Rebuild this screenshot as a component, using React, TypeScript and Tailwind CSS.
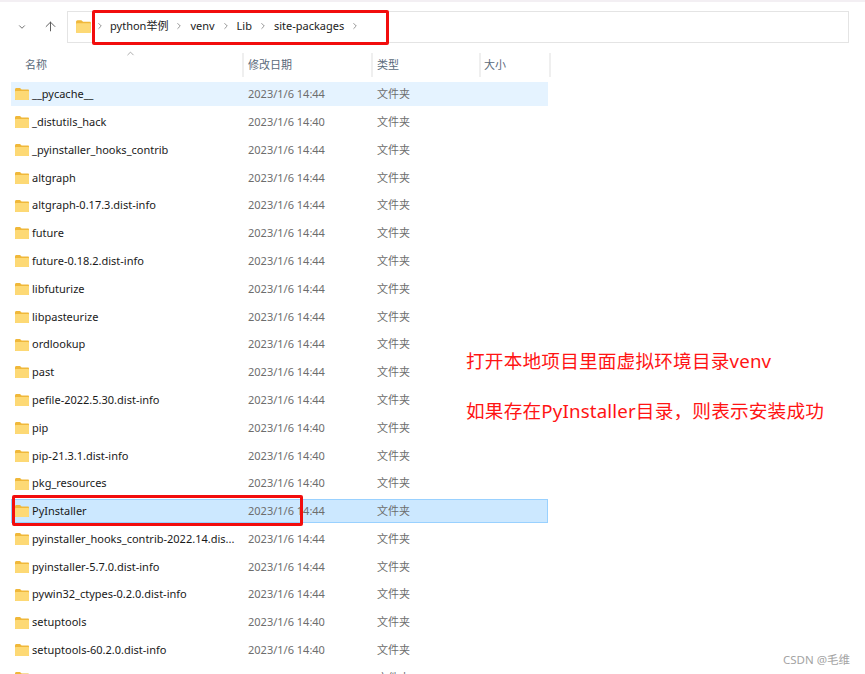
import { ChevronDown, ArrowUp, ChevronRight, ChevronUp } from 'lucide-react'

const rows = [
  ['__pycache__', '2023/1/6 14:44'],
  ['_distutils_hack', '2023/1/6 14:40'],
  ['_pyinstaller_hooks_contrib', '2023/1/6 14:44'],
  ['altgraph', '2023/1/6 14:44'],
  ['altgraph-0.17.3.dist-info', '2023/1/6 14:44'],
  ['future', '2023/1/6 14:44'],
  ['future-0.18.2.dist-info', '2023/1/6 14:44'],
  ['libfuturize', '2023/1/6 14:44'],
  ['libpasteurize', '2023/1/6 14:44'],
  ['ordlookup', '2023/1/6 14:44'],
  ['past', '2023/1/6 14:44'],
  ['pefile-2022.5.30.dist-info', '2023/1/6 14:44'],
  ['pip', '2023/1/6 14:40'],
  ['pip-21.3.1.dist-info', '2023/1/6 14:40'],
  ['pkg_resources', '2023/1/6 14:40'],
  ['PyInstaller', '2023/1/6 14:44'],
  ['pyinstaller_hooks_contrib-2022.14.dis...', '2023/1/6 14:44'],
  ['pyinstaller-5.7.0.dist-info', '2023/1/6 14:44'],
  ['pywin32_ctypes-0.2.0.dist-info', '2023/1/6 14:44'],
  ['setuptools', '2023/1/6 14:40'],
  ['setuptools-60.2.0.dist-info', '2023/1/6 14:40'],
  ['wheel', '2023/1/6 14:40'],
]

const Folder = ({ size = 16 }: { size?: number }) => (
  <svg width={size} height={size} viewBox="0 0 16 16" className="shrink-0">
    <path d="M1 3.5C1 2.7 1.6 2 2.4 2H6l1.6 1.6H14c.6 0 1 .5 1 1V13c0 .6-.5 1-1 1H2c-.6 0-1-.4-1-1z" fill="#f0b83a" />
    <path d="M1 6c0-.6.5-1 1-1h12c.6 0 1 .4 1 1v7c0 .6-.5 1-1 1H2c-.6 0-1-.4-1-1z" fill="#fdd975" />
  </svg>
)

const Crumb = ({ label }: { label: string }) => (
  <div className="flex items-center gap-[6px]">
    <span>{label}</span>
    <ChevronRight size={10} strokeWidth={1.5} className="text-[#555]" />
  </div>
)

const Row = ({ name, date, index }: { name: string; date: string; index: number }) => {
  const selected = name === 'PyInstaller'
  const hovered = index === 0
  return (
    <div className="relative flex h-[27.8px] items-center text-[11px]">
      <div
        className={`flex h-[24px] w-[537px] items-center border pt-[1px] ${
          selected
            ? 'border-[#99d1ff] bg-[#cce8ff]'
            : hovered
              ? 'border-transparent bg-[#e5f3ff]'
              : 'border-transparent'
        }`}
      >
        <div className="flex w-[236px] items-center gap-[2px] pl-[2px] text-[#1a1a1a]">
          <Folder />
          <span className="whitespace-nowrap">{name}</span>
        </div>
        <span className="w-[129px] whitespace-nowrap text-[#6d6d6d]">{date}</span>
        <span className="text-[#6d6d6d]">文件夹</span>
      </div>
      {selected && (
        <div className="absolute left-[1px] top-[-2px] h-[31px] w-[291px] rounded-[2px] border-[3px] border-[#f20d0d]" />
      )}
    </div>
  )
}

export default function App() {
  return (
    <div className="relative h-[674px] w-[865px] overflow-hidden bg-white font-['Noto_Sans','Noto_Sans_CJK_SC',sans-serif]">
      <div className="h-[2px] bg-[#f3eff3]" />

      {/* toolbar */}
      <div className="flex h-[51px] items-start pl-[17px] pt-[9px]">
        <div className="flex h-[31px] items-center gap-[16px] text-[#555]">
          <ChevronDown size={10} strokeWidth={2} />
          <ArrowUp size={15} strokeWidth={1.5} />
        </div>
        <div className="relative ml-[9px] flex h-[32px] w-[782px] items-center border border-[#e4e4e4] pb-[2px] pl-[7px] text-[11px] text-[#222]">
          <Folder size={17} />
          <ChevronRight size={10} strokeWidth={1.5} className="ml-[3px] text-[#555]" />
          <div className="ml-[5px] flex items-center gap-[6px]">
            <Crumb label="python举例" />
            <Crumb label="venv" />
            <Crumb label="Lib" />
            <Crumb label="site-packages" />
          </div>
          <div className="absolute left-[24px] top-[-2px] h-[35px] w-[297px] rounded-[2px] border-[3px] border-[#f20d0d]" />
        </div>
      </div>

      {/* column headers */}
      <div className="relative ml-[11px] flex h-[24px] w-[540px] items-center text-[11px] text-[#5a6a7a]">
        <span className="w-[231px] pl-[14px]">名称</span>
        <span className="flex h-full w-[129px] items-center border-l-2 border-[#efefef] pl-[4px]">修改日期</span>
        <span className="flex h-full w-[108px] items-center border-l-2 border-[#efefef] pl-[4px]">类型</span>
        <span className="flex h-full w-[72px] items-center border-x-2 border-[#efefef] pl-[3px]">大小</span>
        <ChevronUp size={11} strokeWidth={1.5} className="absolute left-[114px] top-[-5px] text-[#888]" />
      </div>

      {/* file list with the note beside it */}
      <div className="flex pt-[3px]">
        <div className="ml-[11px] w-[540px] shrink-0">
          {rows.map((r, i) => (
            <Row key={r[0]} name={r[0]} date={r[1]} index={i} />
          ))}
        </div>
        <div className="ml-[-85px] flex flex-col gap-[26px] pt-[269px] text-[18.67px] leading-[24px] tracking-[0.17px] whitespace-nowrap text-[#ff1414]">
          <p>打开本地项目里面虚拟环境目录venv</p>
          <p>如果存在PyInstaller目录，则表示安装成功</p>
        </div>
      </div>

      <span className="absolute right-[15px] top-[651px] text-[11.5px] text-[#a3a3a3]">CSDN @毛维</span>
    </div>
  )
}
